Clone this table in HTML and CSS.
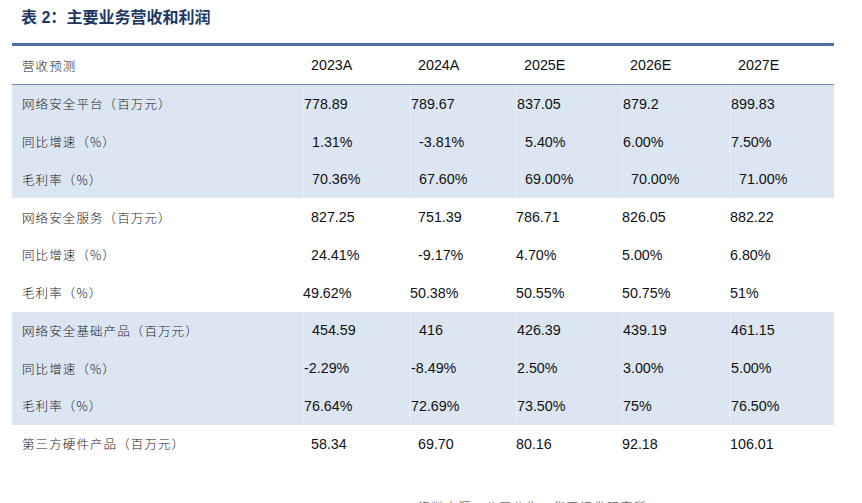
FILE: index.html
```html
<!DOCTYPE html>
<html lang="zh-CN">
<head>
<meta charset="utf-8">
<title>表 2：主要业务营收和利润</title>
<link rel="stylesheet" href="styles.css">
</head>
<body>
<div class="page">
  <h1 class="title"><span class="t-cjk">表</span> 2：<span class="t-cjk">主要业务营收和利润</span></h1>
  <div class="tbl">
    <div class="row head">
      <div class="lbl">营收预测</div>
      <div class="c w">2023A</div><div class="c w">2024A</div><div class="c w">2025E</div><div class="c w">2026E</div><div class="c w">2027E</div>
    </div>

    <div class="row band">
      <div class="lbl">网络安全平台（百万元）</div>
      <div class="c">778.89</div><div class="c">789.67</div><div class="c">837.05</div><div class="c">879.2</div><div class="c">899.83</div>
    </div>
    <div class="row band">
      <div class="lbl">同比增速（%）</div>
      <div class="c w">1.31%</div><div class="c w">-3.81%</div><div class="c w">5.40%</div><div class="c">6.00%</div><div class="c">7.50%</div>
    </div>
    <div class="row band">
      <div class="lbl">毛利率（%）</div>
      <div class="c w">70.36%</div><div class="c w">67.60%</div><div class="c w">69.00%</div><div class="c w">70.00%</div><div class="c w">71.00%</div>
    </div>

    <div class="row">
      <div class="lbl">网络安全服务（百万元）</div>
      <div class="c w">827.25</div><div class="c w">751.39</div><div class="c">786.71</div><div class="c">826.05</div><div class="c">882.22</div>
    </div>
    <div class="row">
      <div class="lbl">同比增速（%）</div>
      <div class="c w">24.41%</div><div class="c w">-9.17%</div><div class="c">4.70%</div><div class="c">5.00%</div><div class="c">6.80%</div>
    </div>
    <div class="row">
      <div class="lbl">毛利率（%）</div>
      <div class="c">49.62%</div><div class="c">50.38%</div><div class="c">50.55%</div><div class="c">50.75%</div><div class="c">51%</div>
    </div>

    <div class="row band">
      <div class="lbl">网络安全基础产品（百万元）</div>
      <div class="c w">454.59</div><div class="c w">416</div><div class="c">426.39</div><div class="c">439.19</div><div class="c">461.15</div>
    </div>
    <div class="row band">
      <div class="lbl">同比增速（%）</div>
      <div class="c">-2.29%</div><div class="c">-8.49%</div><div class="c">2.50%</div><div class="c">3.00%</div><div class="c">5.00%</div>
    </div>
    <div class="row band">
      <div class="lbl">毛利率（%）</div>
      <div class="c">76.64%</div><div class="c">72.69%</div><div class="c">73.50%</div><div class="c">75%</div><div class="c">76.50%</div>
    </div>

    <div class="row">
      <div class="lbl">第三方硬件产品（百万元）</div>
      <div class="c w">58.34</div><div class="c w">69.70</div><div class="c">80.16</div><div class="c">92.18</div><div class="c">106.01</div>
    </div>
  </div>
  <p class="source">资料来源：公司公告，华西证券研究所</p>
</div>
</body>
</html>
```

FILE: styles.css
```css
html, body {
  margin: 0;
  padding: 0;
  background: #ffffff;
  overflow: hidden;
}

.page {
  width: 822px;
  padding: 6px 0 0 12px;
}

.title {
  margin: 0 0 0 9px;
  font-family: "Liberation Sans", "Noto Sans CJK SC", sans-serif;
  font-size: 16px;
  font-weight: bold;
  line-height: 20px;
  color: #1d3866;
}

.title .t-cjk {
  font-family: "Noto Sans CJK SC", sans-serif;
}

.tbl {
  margin-top: 15px;
  border-top: 3px solid #4a6fa3;
}

.row {
  display: grid;
  grid-template-columns: 291px 107px 106px 106px 108px 104px;
  height: 37.75px;
  align-items: center;
}

.row.head {
  height: 38px;
  border-bottom: 1px solid #6d8cbc;
}

.row.band {
  background: #dce6f2;
}

.lbl {
  padding-left: 10px;
  font-family: "Noto Sans CJK SC", sans-serif;
  font-weight: 300;
  font-size: 12.5px;
  letter-spacing: 1.1px;
  color: #1a1a1a;
  white-space: nowrap;
}

.c {
  height: 100%;
  display: flex;
  align-items: center;
  padding-left: 0;
  font-family: "Liberation Sans", Arial, sans-serif;
  font-size: 14.3px;
  color: #111111;
  white-space: nowrap;
  box-sizing: border-box;
}

.row.band .c {
  border-left: 1px solid rgba(255, 255, 255, 0.35);
}

.c.w {
  padding-left: 8px;
}

.source {
  margin: 36px 0 0 406px;
  font-family: "Noto Sans CJK SC", sans-serif;
  font-weight: 300;
  font-size: 12px;
  line-height: 16px;
  letter-spacing: 1.5px;
  color: #333333;
}
```
